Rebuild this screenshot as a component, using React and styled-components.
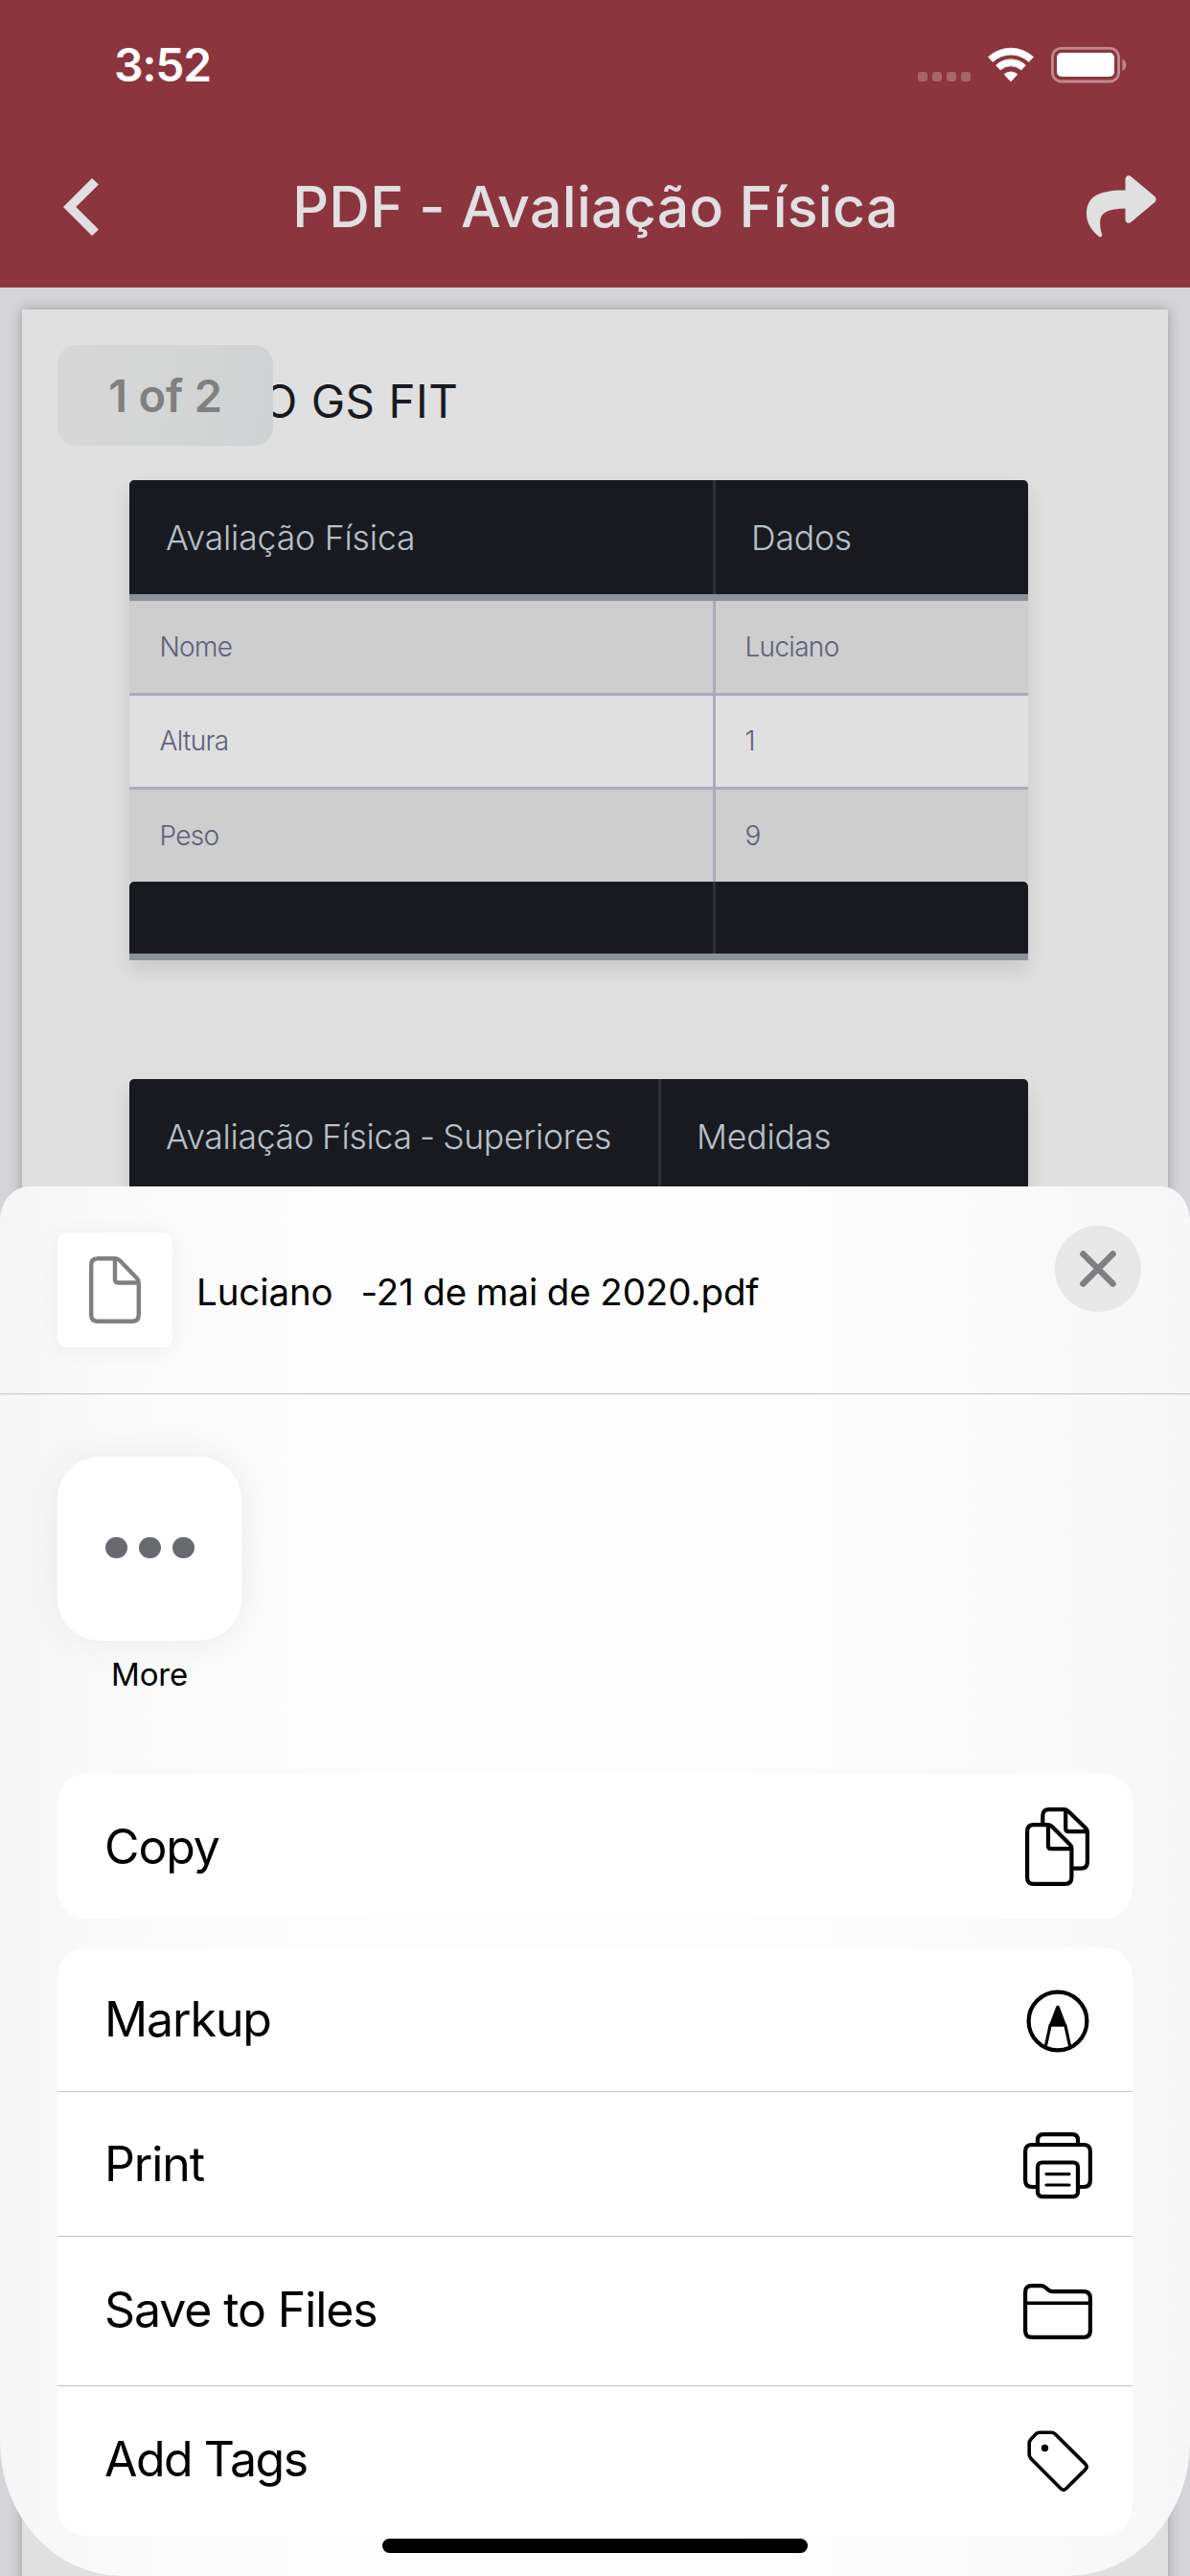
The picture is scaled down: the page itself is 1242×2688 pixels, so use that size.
import React from "react";
import styled, { createGlobalStyle } from "styled-components";

const GlobalStyle = createGlobalStyle`
  * { box-sizing: border-box; }
  body { margin: 0; background: #d5d4d9; }
`;

const Screen = styled.div`
  position: relative;
  width: 1242px;
  height: 2688px;
  overflow: hidden;
  background: #d5d4d9;
  font-family: Inter, "Liberation Sans", sans-serif;
`;

const Header = styled.header`
  height: 300px;
  background: #8c353f;
  display: flex;
  flex-direction: column;
`;

const StatusBar = styled.div`
  height: 135px;
  display: flex;
  align-items: center;
  justify-content: space-between;
  padding: 0 65px 0 119px;
`;

const Time = styled.div`
  color: #fff;
  font-size: 48px;
  font-weight: 600;
  letter-spacing: -1.3px;
`;

const StatusIcons = styled.div`
  display: flex;
  align-items: center;
`;

const SignalDots = styled.div`
  display: flex;
  gap: 5px;
  margin: 25px 18px 0 0;
`;

const SignalDot = styled.span`
  width: 10px;
  height: 10px;
  border-radius: 3px;
  background: #a8646c;
`;

const NavBar = styled.div`
  flex: 1;
  display: flex;
  align-items: center;
  justify-content: space-between;
  padding: 0 35px 4px 66px;
`;

const Title = styled.h1`
  margin: 0 0 0 5px;
  color: #e0e0e0;
  font-size: 59px;
  font-weight: 500;
  line-height: 72px;
  letter-spacing: 0.3px;
  white-space: nowrap;
`;

const Viewer = styled.main`
  padding: 23px 23px 0;
`;

const Page = styled.article`
  position: relative;
  height: 2400px;
  background: #e0e0e0;
  box-shadow: 0 0 12px rgba(0, 0, 0, 0.28);
  padding: 60px 146px 0 112px;
`;

const PageCount = styled.div`
  position: absolute;
  left: 37px;
  top: 37px;
  width: 225px;
  height: 105px;
  border-radius: 20px;
  background: linear-gradient(100deg, #d7d7d7, #d4d6d5 50%, #cfd2d3);
  display: flex;
  align-items: center;
  justify-content: center;
  color: #808080;
  font-size: 47px;
  font-weight: 600;
  letter-spacing: -0.2px;
`;

const PageHeading = styled.h2`
  margin: 0 0 0 139px;
  height: 118px;
  line-height: 72px;
  font-size: 47.5px;
  font-weight: 400;
  color: #191a1f;
  letter-spacing: 0.5px;
  white-space: nowrap;
`;

const Table = styled.section`
  margin-bottom: 124px;
  box-shadow: 0 10px 20px rgba(0, 0, 0, 0.11);
  border-radius: 5px 5px 0 0;
`;

const Row = styled.div`
  display: grid;
  grid-template-columns: ${(p) => p.$split}px 1fr;
`;

const HeadRow = styled(Row)`
  height: ${(p) => p.$height}px;
  background: #191a1f;
  border-bottom: 7px solid #8a9399;
  border-radius: 5px 5px 0 0;
  color: #b9c2ca;
  font-size: 35.5px;
  font-weight: 300;
`;

const HeadCell = styled.div`
  display: flex;
  align-items: center;
  padding-left: 38px;
  padding-top: 1px;
  letter-spacing: ${(p) => p.$ls ?? -0.15}px;
  word-spacing: ${(p) => p.$ws || 0}px;
  white-space: pre;
  & + & {
    border-left: 3px solid #2b303a;
    padding-left: 37px;
  }
`;

const BodyRow = styled(Row)`
  height: ${(p) => p.$height}px;
  background: ${(p) => (p.$shaded ? "#cecece" : "#e0e0e0")};
  border-bottom: ${(p) => (p.$last ? 0 : 3)}px solid #a9abbb;
  color: #5d6079;
  font-size: 28px;
  font-weight: 300;
`;

const Cell = styled.div`
  display: flex;
  align-items: center;
  padding-left: 31.5px;
  padding-bottom: 1px;
  letter-spacing: -0.7px;
  & + & {
    border-left: 3px solid #a9abbb;
    padding-left: 30.5px;
  }
`;

const Sheet = styled.section`
  position: absolute;
  left: 0;
  right: 0;
  top: 1238px;
  bottom: 0;
  border-radius: 30px 30px 128px 128px / 36px 36px 140px 140px;
  background: linear-gradient(90deg, #f6f6f7, #fafafa 10%, #fdfdfd 32%, #fdfdfd 62%, #fafafa 84%, #f7f7f8);
  display: flex;
  flex-direction: column;
`;

const FileBar = styled.div`
  height: 217px;
  border-bottom: 1px solid #c3c3c5;
  display: flex;
  align-items: flex-start;
  padding: 41px 51px 0 60px;
`;

const FileThumb = styled.div`
  width: 120px;
  height: 120px;
  margin-top: 7px;
  border-radius: 9px;
  background: #fff;
  box-shadow: 0 2px 22px rgba(0, 0, 0, 0.06);
  display: flex;
  align-items: center;
  justify-content: center;
`;

const FileName = styled.div`
  flex: 1;
  padding-left: 25px;
  margin-top: 44px;
  line-height: 50px;
  font-size: 38.5px;
  color: #000;
  letter-spacing: -0.1px;
  word-spacing: -1.1px;
  white-space: pre;
`;

const CloseButton = styled.button`
  width: 90px;
  height: 90px;
  padding: 0;
  border: 0;
  border-radius: 50%;
  background: #e8e8e9;
  display: flex;
  align-items: center;
  justify-content: center;
`;

const Apps = styled.div`
  height: 396px;
  padding: 65px 60px 0;
  display: flex;
`;

const AppItem = styled.div`
  width: 192px;
  display: flex;
  flex-direction: column;
  align-items: center;
`;

const AppTile = styled.div`
  width: 192px;
  height: 192px;
  padding: 0 0 2px 1px;
  border-radius: 44px;
  background: #fff;
  box-shadow: 0 0 40px rgba(0, 0, 0, 0.07);
  display: flex;
  align-items: center;
  justify-content: center;
  gap: 12.5px;
`;

const TileDot = styled.span`
  width: 22.5px;
  height: 22.5px;
  border-radius: 50%;
  background: #696970;
`;

const AppLabel = styled.div`
  margin-top: 15px;
  line-height: 40px;
  font-size: 33px;
  color: #000;
  letter-spacing: -0.2px;
`;

const Card = styled.div`
  margin: 0 60px 30px;
  border-radius: 30px;
  background: #fff;
`;

const Action = styled.div`
  height: ${(p) => p.$height}px;
  display: flex;
  align-items: center;
  justify-content: space-between;
  padding-left: 49px;
  & + & {
    border-top: 1px solid #c3c3c5;
  }
`;

const ActionLabel = styled.span`
  padding-bottom: ${(p) => p.$lift || 0}px;
  font-size: 50px;
  line-height: 62px;
  color: #000;
  letter-spacing: ${(p) => p.$ls ?? -1.1}px;
`;

const ActionIcon = styled.span`
  width: 157px;
  padding-top: ${(p) => p.$drop || 0}px;
  display: flex;
  justify-content: center;
`;

const HomeIndicator = styled.div`
  position: absolute;
  left: 399px;
  top: 2649px;
  width: 444px;
  height: 15px;
  border-radius: 8px;
  background: #000;
`;

const line = { fill: "none", stroke: "#000", strokeWidth: 4.2, strokeLinecap: "round", strokeLinejoin: "round" };

const WifiIcon = () => (
  <svg width="48" height="37" viewBox="0 0 48 37" fill="#fff" stroke="#fff" strokeWidth="0.8" strokeLinejoin="round">
    <path d="M0.5 10.5 A34.5 34.5 0 0 1 47.5 10.5 L42.8 15.5 A27.5 27.5 0 0 0 5.2 15.5 Z" />
    <path d="M8.6 19 A22.5 22.5 0 0 1 39.4 19 L34.8 24 A16 16 0 0 0 13.2 24 Z" />
    <path d="M17.2 28.5 A10.5 10.5 0 0 1 30.8 28.5 L24 36 Z" />
  </svg>
);

const BatterySvg = styled.svg`
  margin-left: 18px;
`;

const BatteryIcon = () => (
  <BatterySvg width="80" height="38" viewBox="0 0 80 38">
    <rect x="1.4" y="1.4" width="69.2" height="34.6" rx="9" fill="none" stroke="#c1898f" strokeWidth="2.8" />
    <rect x="6" y="6" width="60" height="25" rx="5" fill="#fff" />
    <path d="M74.5 12.5 C79.5 14.5 79.5 23 74.5 25 Z" fill="#c1898f" />
  </BatterySvg>
);

const BackIcon = () => (
  <svg width="38" height="60" viewBox="0 0 38 60" fill="#e0e0e0">
    <path d="M30 0 L37 6.5 L13.3 30 L37 53.5 L30 60 L0 30 Z" />
  </svg>
);

const ShareIcon = () => (
  <svg width="73" height="65" viewBox="0 0 73 65" fill="#e0e0e0">
    <path d="M40.5 15.5 V4.5 C40.5 0.5 44 -0.9 46.8 1.6 L71.3 22 Q73.9 25 71.3 28 L46.8 48.6 C44 51 40.5 49.6 40.5 45.8 V34.6 C22 35.2 13.5 38.5 14.2 51 C14.4 55 15 58.5 16.2 61.6 C16.6 64.2 14.6 65.2 12.6 63.4 C5 57 0 49.5 0 40 C0 22.5 12 15.3 40.5 15.5 Z" />
  </svg>
);

const DocIcon = () => (
  <svg width="54" height="70" viewBox="0 0 54 70" fill="none" stroke="#808080" strokeWidth="4.4" strokeLinejoin="round">
    <path d="M8 2.2 H27 Q30 2.2 32 4.2 L50 23 Q51.8 25 51.8 28 V61 Q51.8 67.8 45 67.8 H9 Q2.2 67.8 2.2 61 V9 Q2.2 2.2 9 2.2" />
    <path d="M27 3 V24 Q27 27.5 30.5 27.5 H51" />
  </svg>
);

const CloseIcon = () => (
  <svg width="40" height="40" viewBox="0 0 40 40" stroke="#808084" strokeWidth="6.6" strokeLinecap="round">
    <path d="M4.5 4.5 L35.5 35.5 M35.5 4.5 L4.5 35.5" />
  </svg>
);

const CopyIcon = () => (
  <svg width="67" height="82" viewBox="0 0 67 82" {...line}>
    <path d="M18.3 16 V9 Q18.3 2.1 25 2.1 H40 Q43 2.1 45 4 L63 21.5 Q64.9 23.5 64.9 26 V57 Q64.9 63.6 58 63.6 H51" />
    <path d="M42.2 3 V22 Q42.2 25.2 45.4 25.2 H64" />
    <path d="M9 18.1 H23 Q26 18.1 28 20 L46.5 38.5 Q48.4 40.4 48.4 43 V73 Q48.4 79.9 41.5 79.9 H9 Q2.1 79.9 2.1 73 V25 Q2.1 18.1 9 18.1 Z" />
    <path d="M24 19 V40 Q24 43.2 27.2 43.2 H47.5" />
  </svg>
);

const MarkupIcon = () => (
  <svg width="66" height="66" viewBox="0 0 66 66" {...line}>
    <circle cx="33" cy="33" r="30.4" />
    <path d="M25.2 37 L20.2 60 M40.8 37 L45.8 60" strokeWidth="3.2" />
    <path d="M33 18.5 L26 37 H40 Z" fill="#000" strokeWidth="3.6" />
  </svg>
);

const PrintIcon = () => (
  <svg width="72" height="70" viewBox="0 0 72 70" {...line}>
    <path d="M15 11 V8 Q15 2.1 21 2.1 H51 Q57 2.1 57 8 V11" />
    <path d="M13 57 H9 Q2.1 57 2.1 50 V20 Q2.1 13 9 13 H63 Q69.9 13 69.9 20 V50 Q69.9 57 63 57 H59" />
    <rect x="15" y="31.5" width="42" height="35.6" rx="4.5" />
    <path d="M24 43.6 H48 M24 55 H48" strokeWidth="3.2" />
  </svg>
);

const FolderIcon = () => (
  <svg width="72" height="58" viewBox="0 0 72 58" {...line}>
    <path d="M9 2.1 H18 Q21 2.1 23.2 4 L26 6.4 Q28 8.1 31 8.1 H63 Q69.9 8.1 69.9 15 V49 Q69.9 55.9 63 55.9 H9 Q2.1 55.9 2.1 49 V9 Q2.1 2.1 9 2.1 Z" />
    <path d="M3 20.2 H69" strokeWidth="3.6" />
  </svg>
);

const TagIcon = () => (
  <svg width="66" height="66" viewBox="0 0 66 66" {...line} strokeWidth="3.6">
    <path d="M14 3.2 H26 Q28.6 3.2 30.4 5 L62 36.4 Q64.4 39 62 41.6 L41.5 62 Q39 64.4 36.4 62 L5 30.4 Q3.2 28.6 3.2 26 V14.5 Q3.2 12 5 10.2 L10 5 Q11.8 3.2 14 3.2 Z" />
    <circle cx="19.5" cy="19.5" r="3.7" fill="#000" stroke="none" />
  </svg>
);

const measurements = [
  { label: "Nome", value: "Luciano", height: 99 },
  { label: "Altura", value: "1", height: 98 },
  { label: "Peso", value: "9", height: 96 },
];

const actions = [
  { label: "Markup", Icon: MarkupIcon, height: 150, drop: 3 },
  { label: "Print", Icon: PrintIcon, height: 151, drop: 3 },
  { label: "Save to Files", Icon: FolderIcon, height: 156, lift: 4 },
  { label: "Add Tags", Icon: TagIcon, height: 157, lift: 4, spacing: -1.5 },
];

export default function App() {
  return (
    <Screen>
      <GlobalStyle />
      <Header>
        <StatusBar>
          <Time>3:52</Time>
          <StatusIcons>
            <SignalDots>
              <SignalDot />
              <SignalDot />
              <SignalDot />
              <SignalDot />
            </SignalDots>
            <WifiIcon />
            <BatteryIcon />
          </StatusIcons>
        </StatusBar>
        <NavBar>
          <BackIcon />
          <Title>PDF - Avaliação Física</Title>
          <ShareIcon />
        </NavBar>
      </Header>

      <Viewer>
        <Page>
          <PageHeading>O GS FIT</PageHeading>
          <PageCount>1 of 2</PageCount>
          <Table>
            <HeadRow $split={609} $height={126}>
              <HeadCell>Avaliação Física</HeadCell>
              <HeadCell>Dados</HeadCell>
            </HeadRow>
            {measurements.map((m, i) => (
              <BodyRow
                key={m.label}
                $split={609}
                $height={m.height}
                $shaded={i % 2 === 0}
                $last={i === measurements.length - 1}
              >
                <Cell>{m.label}</Cell>
                <Cell>{m.value}</Cell>
              </BodyRow>
            ))}
            <HeadRow $split={609} $height={82}>
              <HeadCell />
              <HeadCell />
            </HeadRow>
          </Table>
          <Table>
            <HeadRow $split={552} $height={126}>
              <HeadCell $ls={-0.3} $ws={-1.3}>Avaliação Física - Superiores</HeadCell>
              <HeadCell>Medidas</HeadCell>
            </HeadRow>
          </Table>
        </Page>
      </Viewer>

      <Sheet>
        <FileBar>
          <FileThumb>
            <DocIcon />
          </FileThumb>
          <FileName>{"Luciano   -21 de mai de 2020.pdf"}</FileName>
          <CloseButton aria-label="Close">
            <CloseIcon />
          </CloseButton>
        </FileBar>
        <Apps>
          <AppItem>
            <AppTile>
              <TileDot />
              <TileDot />
              <TileDot />
            </AppTile>
            <AppLabel>More</AppLabel>
          </AppItem>
        </Apps>
        <Card>
          <Action $height={151}>
            <ActionLabel>Copy</ActionLabel>
            <ActionIcon>
              <CopyIcon />
            </ActionIcon>
          </Action>
        </Card>
        <Card>
          {actions.map(({ label, Icon, height, drop, lift, spacing }) => (
            <Action key={label} $height={height}>
              <ActionLabel $lift={lift} $ls={spacing}>{label}</ActionLabel>
              <ActionIcon $drop={drop}>
                <Icon />
              </ActionIcon>
            </Action>
          ))}
        </Card>
      </Sheet>
      <HomeIndicator />
    </Screen>
  );
}
